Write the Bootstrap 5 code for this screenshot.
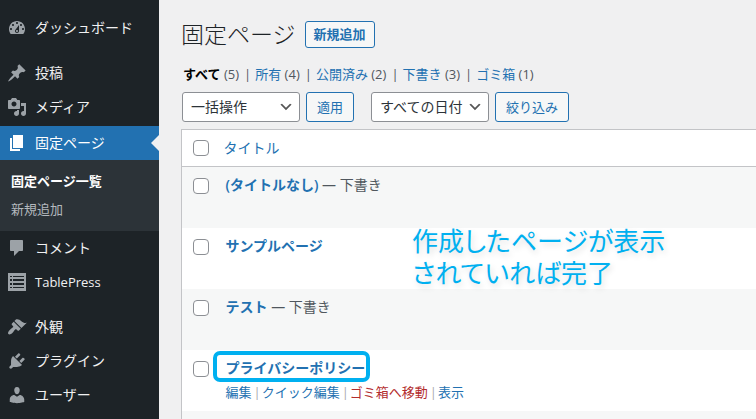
<!DOCTYPE html>
<html lang="ja">
<head>
<meta charset="utf-8">
<meta name="viewport" content="width=device-width, initial-scale=1">
<title>固定ページ</title>
<link rel="stylesheet" href="https://cdn.jsdelivr.net/npm/bootstrap@5.3.0/dist/css/bootstrap.min.css">
<style>
:root { --wp-blue: #2271b1; --wp-line: #c3c4c7; --accent: #00b0f0; }
body { background: #f0f0f1; color: #50575e; font: 13px/20px "Open Sans", "Noto Sans CJK JP", sans-serif; }
a { color: var(--wp-blue); text-decoration: none; }
.sidebar { width: 159px; background: #1d2327; padding-top: 11px; font-size: 14px; }
.sidebar .nav-link { height: 34px; padding: 0 0 0 7px; gap: 8px; color: #f0f0f1; }
.sidebar svg { width: 20px; height: 20px; fill: #9ca2a7; flex: none; }
.latin { font-size: 13px; }
.divided { margin-top: 11px; }
.current-item { margin-top: 2px; }
.sidebar .current-item > .nav-link { background: var(--wp-blue); color: #fff; }
.current-item > .nav-link svg { fill: #fff; }
.current-item > .nav-link::after { content: ""; margin-left: auto; border: 8px solid transparent; border-right-color: #f0f0f1; border-left: 0; }
.submenu { background: #2c3338; padding: 7px 11px 8px; font-size: 13px; line-height: 28px; }
.submenu a { color: #b4b9be; display: block; }
.submenu a.here { color: #fff; font-weight: 700; }
.content { padding: 20px 0 0 22px; min-width: 0; overflow: hidden; }
h1 { font-size: 23px; line-height: 28px; font-weight: 300; color: #1d2327; }
.wp-btn { --bs-btn-padding-y: 0; --bs-btn-padding-x: 10px; --bs-btn-font-size: 13px; --bs-btn-line-height: 28px; --bs-btn-border-radius: 3px;
  --bs-btn-color: var(--wp-blue); --bs-btn-border-color: var(--wp-blue); --bs-btn-bg: #f6f7f7; white-space: nowrap; }
.add-new { --bs-btn-padding-x: 8px; --bs-btn-line-height: 25px; font-weight: 600; margin-left: 9px; }
.views { margin-top: 16px; padding-left: 2px; gap: 5px; }
.views b { color: #000; }
.views li + li::before { content: "|"; margin-right: 4px; }
.filters { margin: 8px 0 7px 1px; gap: 6px; }
.filters .form-select { width: 118px; height: 30px; padding: 0 24px 0 8px; font-size: 14px; line-height: 28px; color: #2c3338; border-color: #8c8f94; border-radius: 3px;
  background-image: url("data:image/svg+xml,%3Csvg xmlns='http://www.w3.org/2000/svg' viewBox='0 0 20 20'%3E%3Cpath d='M5 6l5 5 5-5 2 1-7 7-7-7 2-1z' fill='%23555'/%3E%3C/svg%3E"); background-size: 16px 16px; background-position: right 5px center; }
.filters .dates { margin-left: 11px; }
.pages { border: solid var(--wp-line); border-width: 1px 0 0 1px; margin: 0; color: #50575e; font-size: 14px; line-height: 20px; background: #fff; }
.pages th, .pages td { background: transparent; border: 0; padding: 8px 0 0 16px; height: 61px; font-weight: 400; vertical-align: top; }
.pages thead th { height: 37px; border-bottom: 1px solid var(--wp-line); padding-left: 14px; }
.pages .pick { width: 28px; padding: 11px 0 0 11px; line-height: 16px; }
.pages thead .pick { padding: 10px 0 0 11px; }
.pages tbody tr:nth-child(odd) { background: #f6f7f7; }
.pages .form-check-input { display: block; width: 16px; height: 16px; margin: 0; border: 1px solid #8c8f94; border-radius: 4px; }
.row-title { font-weight: 600; }
.row-actions { font-size: 13px; margin-top: 4px; gap: 2px; }
.row-actions li + li::before { content: "|"; color: #a7aaad; margin-right: 1px; }
.row-actions .trash { color: #b32d2e; }
.ringed::after { content: ""; position: absolute; inset: -7px -5px -4px -13px; border: 4px solid var(--accent); border-radius: 7px; }
.callout-note { position: absolute; left: 231px; top: 95px; margin: 0; color: var(--accent); font: 400 26px/32px "Noto Sans CJK JP", sans-serif; font-feature-settings: "palt"; text-shadow: 2px 3px 6px rgba(0,0,0,.15); white-space: nowrap; }
</style>
<script src="https://cdn.jsdelivr.net/npm/bootstrap@5.3.0/dist/js/bootstrap.bundle.min.js"></script>
</head>
<body>
<div class="d-flex vh-100 overflow-hidden">
  <nav class="sidebar flex-shrink-0" aria-label="管理メニュー">
    <ul class="nav flex-column flex-nowrap">
      <li><a class="nav-link d-flex align-items-center" href="#"><svg viewBox="0 0 20 20" aria-hidden="true"><path d="M3.76 16h12.48c1.1-1.37 1.76-3.11 1.76-5 0-4.42-3.58-8-8-8s-8 3.58-8 8c0 1.89.66 3.63 1.76 5zM10 4c.55 0 1 .45 1 1s-.45 1-1 1-1-.45-1-1 .45-1 1-1zM6 6c.55 0 1 .45 1 1s-.45 1-1 1-1-.45-1-1 .45-1 1-1zm8 0c.55 0 1 .45 1 1s-.45 1-1 1-1-.45-1-1 .45-1 1-1zm-5.37 5.55L12 7v6c0 1.1-.9 2-2 2s-2-.9-2-2c0-.57.24-1.08.63-1.45zM4 10c.55 0 1 .45 1 1s-.45 1-1 1-1-.45-1-1 .45-1 1-1zm12 0c.55 0 1 .45 1 1s-.45 1-1 1-1-.45-1-1 .45-1 1-1zm-5 3c0-.55-.45-1-1-1s-1 .45-1 1 .45 1 1 1 1-.45 1-1z"/></svg>ダッシュボード</a></li>
      <li class="divided"><a class="nav-link d-flex align-items-center" href="#"><svg viewBox="0 0 20 20" aria-hidden="true"><path d="M10.44 3.02l1.82-1.82 6.36 6.35-1.83 1.82c-1.05-.68-2.48-.57-3.41.36l-.75.75c-.92.93-1.04 2.35-.35 3.41l-1.83 1.82-2.41-2.41-2.8 2.79c-.42.42-3.38 2.71-3.8 2.29s1.86-3.39 2.28-3.81l2.79-2.79L4.1 9.36l1.83-1.82c1.05.69 2.48.57 3.4-.36l.75-.75c.93-.92 1.05-2.35.36-3.41z"/></svg>投稿</a></li>
      <li><a class="nav-link d-flex align-items-center" href="#"><svg viewBox="0 0 20 20" aria-hidden="true"><path d="M13 11V4c0-.55-.45-1-1-1h-1.67L9 1H5L3.67 3H2c-.55 0-1 .45-1 1v7c0 .55.45 1 1 1h10c.55 0 1-.45 1-1zM7 4.5c1.38 0 2.5 1.12 2.5 2.5S8.38 9.5 7 9.5 4.5 8.38 4.5 7 5.62 4.5 7 4.5zM14 6h5v10.5c0 1.38-1.12 2.5-2.5 2.5S14 17.88 14 16.5s1.12-2.5 2.5-2.5c.17 0 .34.02.5.05V9h-3V6zm-4 8.05V13h2v3.5c0 1.38-1.12 2.5-2.5 2.5S7 17.88 7 16.5 8.12 14 9.5 14c.17 0 .34.02.5.05z"/></svg>メディア</a></li>
      <li class="current-item">
        <a class="nav-link d-flex align-items-center" href="#" aria-current="true"><svg viewBox="0 0 20 20" aria-hidden="true"><path d="M6 15V2h10v13H6zm-1 1h8v2H3V5h2v11z"/></svg>固定ページ</a>
        <ul class="submenu list-unstyled">
          <li><a class="here" href="#" aria-current="page">固定ページ一覧</a></li>
          <li><a href="#">新規追加</a></li>
        </ul>
      </li>
      <li><a class="nav-link d-flex align-items-center" href="#"><svg viewBox="0 0 20 20" aria-hidden="true"><path d="M4 2h11c.6 0 1 .4 1 1v9c0 .6-.4 1-1 1h-3l-5 5v-5H4c-.6 0-1-.4-1-1V3c0-.6.4-1 1-1z"/></svg>コメント</a></li>
      <li><a class="nav-link d-flex align-items-center" href="#"><svg viewBox="0 0 20 20" aria-hidden="true"><path fill-rule="evenodd" d="M1 1h18v18H1zM3 4v1h2v-1zM6 4v1h11v-1zM3 7v2h2v-2zM6 7v2h11v-2zM3 11v2h2v-2zM6 11v2h11v-2zM3 15v1h2v-1zM6 15v1h11v-1z"/></svg><span class="latin">TablePress</span></a></li>
      <li class="divided"><a class="nav-link d-flex align-items-center" href="#"><svg viewBox="0 0 20 20" aria-hidden="true"><path d="M14.48 11.06L7.41 3.99l1.5-1.5c.5-.56 2.3-.47 3.51.32 1.21.8 1.43 1.28 2.91 2.1 1.18.64 2.45 1.26 4.45.85zm-.71.71L6.7 4.7 4.93 6.47c-.39.39-.39 1.02 0 1.41l1.06 1.06c.39.39.39 1.03 0 1.42-.6.6-1.43 1.11-2.21 1.69-.35.26-.7.53-1.01.84C1.43 14.23.4 16.08 1.4 17.07c.99 1 2.84-.03 4.18-1.36.31-.31.58-.66.85-1.02.57-.78 1.08-1.61 1.69-2.21.39-.39 1.02-.39 1.41 0l1.06 1.06c.39.39 1.02.39 1.41 0z"/></svg>外観</a></li>
      <li><a class="nav-link d-flex align-items-center" href="#"><svg viewBox="0 0 20 20" aria-hidden="true"><path d="M13.11 4.36L9.87 7.6 8 5.73l3.24-3.24c.35-.34 1.05-.2 1.56.32.52.51.66 1.21.31 1.55zm-8 1.77l.91-1.12 9.01 9.01-1.19.84c-.71.71-2.63 1.16-3.82 1.16H6.14L4.9 17.26c-.59.59-1.54.59-2.12 0-.59-.58-.59-1.53 0-2.12l1.24-1.24v-3.88c0-1.13.4-3.19 1.09-3.89zm7.26 3.97l3.24-3.24c.34-.35 1.04-.21 1.55.31.52.51.66 1.21.31 1.55l-3.24 3.25z"/></svg>プラグイン</a></li>
      <li><a class="nav-link d-flex align-items-center" href="#"><svg viewBox="0 0 20 20" aria-hidden="true"><path d="M10 9.25c-2.27 0-2.73-3.44-2.73-3.44C7 4.02 7.82 2 9.97 2c2.16 0 2.98 2.02 2.71 3.81 0 0-.41 3.44-2.68 3.44zm0 2.57L12.72 10c2.39 0 4.52 2.33 4.52 4.53v2.49s-3.65 1.13-7.24 1.13c-3.65 0-7.24-1.13-7.24-1.13v-2.49c0-2.25 1.94-4.48 4.47-4.48z"/></svg>ユーザー</a></li>
    </ul>
  </nav>

  <main class="content flex-grow-1">
    <div class="d-flex align-items-center">
      <h1 class="mb-0">固定ページ</h1>
      <a class="btn wp-btn add-new" href="#">新規追加</a>
    </div>
    <ul class="views list-unstyled d-flex mb-0">
      <li><a href="#" aria-current="page"><b>すべて</b></a> (5)</li>
      <li><a href="#">所有</a> (4)</li>
      <li><a href="#">公開済み</a> (2)</li>
      <li><a href="#">下書き</a> (3)</li>
      <li><a href="#">ゴミ箱</a> (1)</li>
    </ul>
    <form class="filters d-flex">
      <select class="form-select" aria-label="一括操作を選択"><option>一括操作</option></select>
      <button class="btn wp-btn" type="button">適用</button>
      <select class="form-select dates" aria-label="日付で絞り込む"><option>すべての日付</option></select>
      <button class="btn wp-btn" type="button">絞り込み</button>
    </form>
    <div class="position-relative">
      <table class="table pages">
        <thead>
          <tr><th class="pick"><input class="form-check-input" type="checkbox" aria-label="すべて選択"></th><th scope="col"><a href="#">タイトル</a></th></tr>
        </thead>
        <tbody>
          <tr><td class="pick"><input class="form-check-input" type="checkbox" aria-label="(タイトルなし)を選択"></td><td><a class="row-title" href="#">(タイトルなし)</a> — 下書き</td></tr>
          <tr><td class="pick"><input class="form-check-input" type="checkbox" aria-label="サンプルページを選択"></td><td><a class="row-title" href="#">サンプルページ</a></td></tr>
          <tr><td class="pick"><input class="form-check-input" type="checkbox" aria-label="テストを選択"></td><td><a class="row-title" href="#">テスト</a> — 下書き</td></tr>
          <tr><td class="pick"><input class="form-check-input" type="checkbox" aria-label="プライバシーポリシーを選択"></td><td>
            <a class="row-title ringed position-relative d-inline-block" href="#">プライバシーポリシー</a>
            <ul class="row-actions list-unstyled d-flex mb-0">
              <li><a href="#">編集</a></li>
              <li><a href="#">クイック編集</a></li>
              <li><a class="trash" href="#">ゴミ箱へ移動</a></li>
              <li><a href="#">表示</a></li>
            </ul></td></tr>
          <tr><td class="pick"></td><td></td></tr>
        </tbody>
      </table>
      <p class="callout-note">作成したページが表示<br>されていれば完了</p>
    </div>
  </main>
</div>
</body>
</html>
